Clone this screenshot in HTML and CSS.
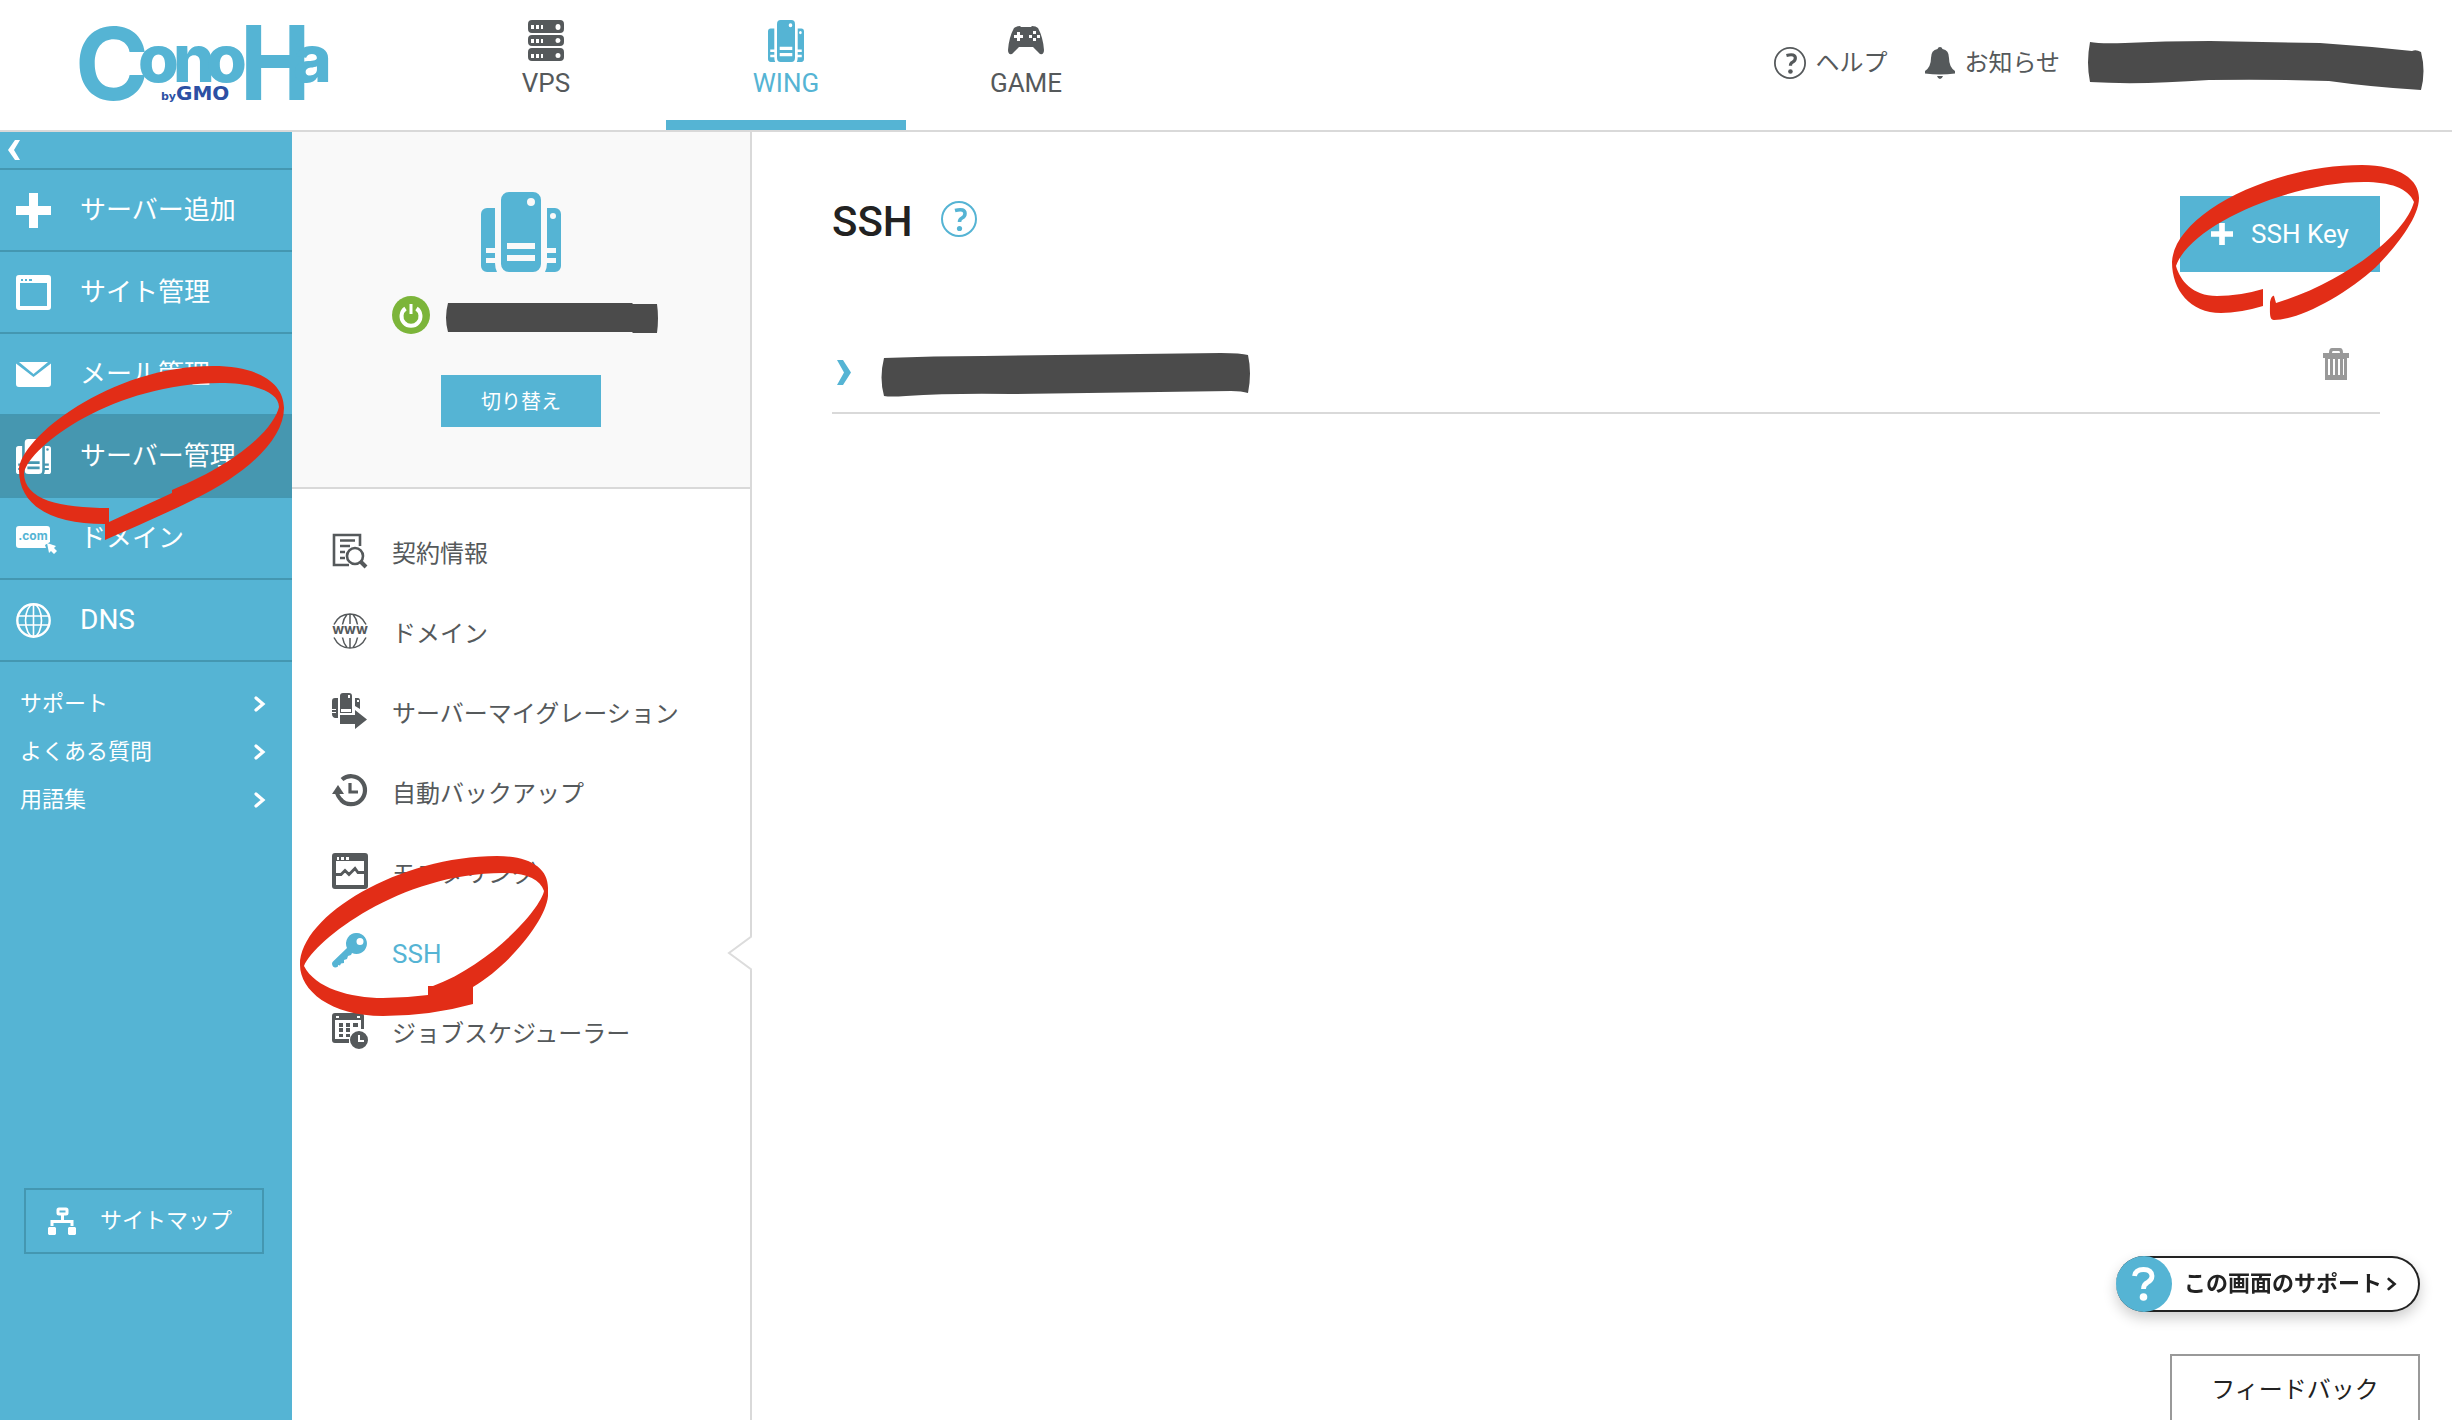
FILE: index.html
```html
<!DOCTYPE html>
<html lang="ja">
<head>
<meta charset="utf-8">
<title>SSH</title>
<link rel="stylesheet" href="styles.css">
</head>
<body>
<svg class="defs" aria-hidden="true">
  <symbol id="wing" viewBox="0 0 80 80">
    <path fill="currentColor" fill-rule="evenodd" d="M28 0h24a8 8 0 0 1 8 8v64a8 8 0 0 1-8 8H28a8 8 0 0 1-8-8V8a8 8 0 0 1 8-8zM26 51v6h28v-6zM26 63v6h28v-6zM50 6a4 4 0 1 0 0 8 4 4 0 0 0 0-8z"/>
    <path fill="currentColor" fill-rule="evenodd" d="M6 16h8v40H5v5h9v5H5v5h9q0 5 2 9H6a6 6 0 0 1-6-6V22a6 6 0 0 1 6-6zM74 16h-8v40h9v5h-9v5h9v5h-9q0 5-2 9h10a6 6 0 0 0 6-6V22a6 6 0 0 0-6-6zM72 21a3 3 0 1 1 0 6 3 3 0 0 1 0-6z"/>
  </symbol>
  <symbol id="chev" viewBox="0 0 12 16"><path d="M2 2l7 6-7 6" fill="none" stroke="currentColor" stroke-width="3.2" stroke-linecap="round"/></symbol>
  <symbol id="help" viewBox="0 0 36 36">
    <circle cx="18" cy="18" r="17" fill="none" stroke="currentColor" stroke-width="2"/>
    <path d="M14 9.500q10-2.500 10 3 0 3-3 4.500-2.500 1.200-2.500 4" fill="none" stroke="currentColor" stroke-width="3.600"/>
    <circle cx="18.500" cy="27.500" r="2.600" fill="currentColor"/>
  </symbol>
  <symbol id="plus" viewBox="0 0 35 35"><path fill="currentColor" d="M13 0h9v13h13v9H22v13h-9V22H0v-9h13z"/></symbol>
</svg>

<header class="header">
  <a class="logo" href="#">
    <svg viewBox="0 0 256 80" width="256" height="80">
      <text class="logo-name"><tspan class="logo-c" x="-5" y="74">C</tspan><tspan class="logo-small" x="58 93 126" y="56">ono</tspan><tspan class="logo-h" x="157" y="74">H</tspan><tspan class="logo-small" x="213" y="56">a</tspan></text>
      <text class="logo-gmo" y="74"><tspan class="logo-by" x="81">by</tspan><tspan x="96">GMO</tspan></text>
    </svg>
  </a>
  <nav class="tabs">
    <a class="tab" href="#">
      <svg viewBox="0 0 36 42" width="36" height="42"><path fill="currentColor" fill-rule="evenodd" d="M4 0h28q4 0 4 4v5q0 4-4 4H4q-4 0-4-4V4q0-4 4-4zm-1 5v4h3V5zm5 0v4h3V5zm5 0v4h2V5zm17-1a2.500 3 0 1 0 0 6 2.500 3 0 0 0 0-6zM4 15h28q4 0 4 4v3q0 4-4 4H4q-4 0-4-4v-3q0-4 4-4zm-1 4v4h3v-4zm5 0v4h3v-4zm5 0v4h2v-4zm17-1a2.500 2.500 0 1 0 0 5 2.500 2.500 0 0 0 0-5zM4 28h28q4 0 4 4v5q0 4-4 4H4q-4 0-4-4v-5q0-4 4-4zm-1 6v4h3v-4zm5 0v4h3v-4zm5 0v4h2v-4zm17-1a2.500 2.500 0 1 0 0 5 2.500 2.500 0 0 0 0-5z"/></svg>
      <span>VPS</span>
    </a>
    <a class="tab tab-on" href="#">
      <svg viewBox="0 0 80 80" width="36" height="42" preserveAspectRatio="none"><use href="#wing"/></svg>
      <span>WING</span>
    </a>
    <a class="tab" href="#">
      <svg viewBox="0 0 36 42" width="36" height="42"><path fill="currentColor" fill-rule="evenodd" d="M6 8q2-2 6-2l1 1h10l1-1q4 0 6 2 5 9 6 22 0 5-4 4l-7-7H11l-7 7q-4 1-4-4Q1 17 6 8zm3 4v3H6v3h3v3h3v-3h3v-3h-3v-3zm16-1v3h3v-3zm0 7v3h3v-3zm-4-3v3h3v-3zm8 0v3h3v-3z"/></svg>
      <span>GAME</span>
    </a>
  </nav>
  <div class="tools">
    <a class="tool" href="#"><svg width="32" height="32"><use href="#help"/></svg>ヘルプ</a>
    <a class="tool" href="#"><svg viewBox="0 0 30 32" width="30" height="32"><path fill="currentColor" d="M15 0q2 0 2.500 2Q24 3 24 11q0 9 6 13v2.500q-15 2-30 0V24q6-4 6-13 0-8 6.500-9Q13 0 15 0zM12 29h6q-1 3-3 3t-3-3z"/></svg>お知らせ</a>
    <svg class="account" viewBox="0 0 336 50" width="336" height="50"><path fill="#4b4b4b" d="M2 1q10 2 35 1Q75 0 122 0l110 2q45 3 92 8 4-2 9 1 5 19 0 38-50-3-92-9-60-2-120-1-70 5-119 2Q-2 22 2 1z"/></svg>
  </div>
</header>

<div class="body">
  <aside class="side">
    <button class="collapse"><svg viewBox="0 0 12 20" width="12" height="20"><path fill="#fff" d="M7 0h5L6 10l6 10H7L0 10z"/></svg></button>
    <nav class="side-nav">
      <a class="side-item" href="#"><svg width="35" height="35"><use href="#plus"/></svg>サーバー追加</a>
      <a class="side-item" href="#"><svg viewBox="0 0 35 35" width="35" height="35"><path fill="#fff" fill-rule="evenodd" d="M3 0h29q3 0 3 3v29q0 3-3 3H3q-3 0-3-3V3q0-3 3-3zm1 8v23h27V8zm1-4v2h2V4zm4 0v2h2V4zm4 0v2h3V4z"/></svg>サイト管理</a>
      <a class="side-item" href="#"><svg viewBox="0 0 35 35" width="35" height="35"><path fill="#fff" d="M3 5h29l-14.500 12zM0 6.500L17.500 20 35 6.500V27q0 3-3 3H3q-3 0-3-3z"/></svg>メール管理</a>
      <div class="side-cell">
        <a class="side-item side-on" href="#"><svg width="35" height="35"><use href="#wing"/></svg>サーバー管理</a>
        <svg class="mark mark-side" viewBox="12 360 280 190" width="280" height="190"><path d="M213 366C260 366 284 384 284 408 284 440 245 475 193 500 165 514 130 529 105 540V524C50 524 19 505 19 470 20 438 110 366 213 366ZM220 383C115 383 30 445 24 473 24 500 60 508 109 508V522L172 493V490C245 460 275 425 279 407 279 392 255 383 220 383Z"/></svg>
      </div>
      <a class="side-item" href="#"><svg class="com" viewBox="0 0 42 35" width="42" height="35"><path fill="#fff" d="M3 5h28q3 0 3 3v13l-5 3 1 3H3q-3 0-3-3V8q0-3 3-3zM31 22l9 3-2 2 3 3-3 3-3-3-2 2z"/><text x="17" y="19" text-anchor="middle" fill="#55b4d4">.com</text></svg>ドメイン</a>
      <a class="side-item" href="#"><svg viewBox="0 0 35 35" width="35" height="35"><g fill="none" stroke="#fff" stroke-width="1.600"><circle cx="17.500" cy="17.500" r="16.200" stroke-width="2.400"/><ellipse cx="17.500" cy="17.500" rx="8" ry="16"/><path d="M17.500 1v33M2 13h31M2 22h31"/></g></svg>DNS</a>
    </nav>
    <nav class="links">
      <a href="#">サポート<svg width="12" height="16"><use href="#chev"/></svg></a>
      <a href="#">よくある質問<svg width="12" height="16"><use href="#chev"/></svg></a>
      <a href="#">用語集<svg width="12" height="16"><use href="#chev"/></svg></a>
    </nav>
    <a class="sitemap" href="#"><svg viewBox="0 0 28 28" width="28" height="28"><g fill="none" stroke="#fff" stroke-width="3"><rect x="10" y="2" width="9" height="5" rx="1"/><path d="M14.500 8v6M4 19v-4.500h20V19"/></g><path fill="#fff" d="M1 20h6l1 1v6l-1 1H1l-1-1v-6zM21 20h6l1 1v6l-1 1h-6l-1-1v-6z"/></svg>サイトマップ</a>
  </aside>

  <section class="panel">
    <div class="server">
      <svg class="server-icon" width="80" height="80"><use href="#wing"/></svg>
      <div class="server-name">
        <svg viewBox="0 0 38 38" width="38" height="38"><circle cx="19" cy="19" r="19" fill="#7cb53a"/><path d="M13.500 12.500a9.500 9.500 0 1 0 11 0" fill="none" stroke="#fff" stroke-width="4"/><path d="M19 8v10" stroke="#fff" stroke-width="3"/></svg>
        <svg class="server-label" viewBox="0 0 212 30" width="212" height="30"><path fill="#4b4b4b" d="M2 0h184l1 1h24q2 14 0 29h-24l-1-1H2q-4-14 0-29z"/></svg>
      </div>
      <button class="btn switch">切り替え</button>
    </div>
    <nav class="menu">
      <a class="menu-item" href="#"><svg viewBox="0 0 36 36" width="36" height="36"><g fill="none" stroke="currentColor" stroke-width="2.600"><path d="M28 13V2H2v30h15M8 7.500h15M8 13h10M8 19h5M8 25h5"/><circle cx="23" cy="23" r="8"/><path d="M29 29l5 5" stroke-width="4"/></g></svg>契約情報</a>
      <a class="menu-item" href="#"><svg class="www" viewBox="0 0 36 36" width="36" height="36"><g fill="none" stroke="currentColor" stroke-width="1.500"><path d="M2 11.500Q7 1 18 1t16 10.500M2 24.500Q7 35 18 35t16-10.500M18 1v10M18 25v10M15 1.500q-3.500 4-4.500 10M21 1.500q3.500 4 4.500 10M10.500 24.500q1 6 4.500 10M25.500 24.500q-1 6-4.500 10"/></g><text x="18" y="21" text-anchor="middle" fill="currentColor">www</text></svg>ドメイン</a>
      <a class="menu-item" href="#"><svg viewBox="0 0 36 36" width="36" height="36"><path fill="currentColor" fill-rule="evenodd" d="M11 0h6q3 0 3 3v17H8V3q0-3 3-3zm5 2v3h2V2zM9 16v3h10v-3zM3 5h3v20H3q-3-1-3-4v-1h4v-1H0v-2h4v-1H0V8q0-3 3-3zM23 5h3q2 0 2 3v8l-5-3zm2 2v2h2V7zM8 22h15v-5l12 9.500L23 36v-5H8z"/></svg>サーバーマイグレーション</a>
      <a class="menu-item" href="#"><svg viewBox="0 0 36 36" width="36" height="36"><path d="M10 6.500A14 14 0 1 1 9 27" fill="none" stroke="currentColor" stroke-width="4.200"/><path d="M6 12l6 9H0z" fill="currentColor"/><path d="M4.500 18q1 6 5.500 9.500" fill="none" stroke="currentColor" stroke-width="4"/><path d="M18 10v9h8" fill="none" stroke="currentColor" stroke-width="3.200"/></svg>自動バックアップ</a>
      <a class="menu-item" href="#"><svg viewBox="0 0 36 36" width="36" height="36"><path fill="currentColor" fill-rule="evenodd" d="M3 0h30q3 0 3 3v30q0 3-3 3H3q-3 0-3-3V3q0-3 3-3zm1 8v24h28V8zm1-4v3h2V4zm4 0v3h3V4zm5 0v3h3V4z"/><path d="M4 21.500h5l4-4 4 4 6-6 3 4h6" fill="none" stroke="currentColor" stroke-width="2.800"/></svg>モニタリング</a>
      <div class="menu-cell">
        <a class="menu-item menu-on" href="#"><svg viewBox="0 0 36 36" width="36" height="36"><path fill="currentColor" fill-rule="evenodd" d="M25 0a10.500 10.500 0 1 1-5 20l-1 2-3 1-1 3-3 1v3l-3 .500-1 2-2-.500v1.500q-3 2-5 0-2-3 0-5L15 15A10.500 10.500 0 0 1 25 0zm3 5a3.500 3.500 0 1 0 0 7 3.500 3.500 0 0 0 0-7z"/></svg>SSH</a>
        <svg class="notch" viewBox="0 0 25 36" width="25" height="36"><path d="M25 1L2 18l23 17" fill="#fff" stroke="#dcdcdc" stroke-width="2"/></svg>
        <svg class="mark mark-menu" viewBox="292 850 264 170" width="264" height="170"><path d="M497 856C530 856 548 868 548 888V896C546 920 510 965 473 987V1004Q430 1016 383 1016C330 1016 300 990 300 965 300 915 400 856 497 856ZM503 873C400 873 315 940 304 966 315 988 350 998 383 998Q405 998 428 995V986H433C490 965 540 910 544 891 540 879 525 873 503 873Z"/></svg>
      </div>
      <a class="menu-item" href="#"><svg viewBox="0 0 36 36" width="36" height="36"><path fill="currentColor" fill-rule="evenodd" d="M3 0h26q3 0 3 3v13h-3V7H3v19h14v4H3q-3 0-3-3V3q0-3 3-3zm1 3v2h3V3zm21 0v2h3V3zM7 10h4v4H7zm7 0h4v4h-4zm7 0h5v4h-5zM7 15h4v4H7zm7 0h4v4h-4zm-7 6h4v3H7zm7 0h4v3h-4zM27 18a9 9 0 1 1 0 18 9 9 0 0 1 0-18zm-1 4v7h6v-2h-4v-5z"/></svg>ジョブスケジューラー</a>
    </nav>
  </section>

  <main class="main">
    <div class="head">
      <h1>SSH</h1>
      <svg class="head-help" width="36" height="36"><use href="#help"/></svg>
      <div class="add-wrap">
        <button class="btn add"><svg width="22" height="22"><use href="#plus"/></svg>SSH Key</button>
        <svg class="mark mark-add" viewBox="2164 160 264 168" width="264" height="168"><path d="M2362 165C2400 165 2419 180 2419 198 2419 225 2376 267 2376 267 2345 295 2300 320 2274 320 2269 320 2270 312 2270 302 2271 297 2273 295 2274 296L2276 303C2345 282 2405 235 2414 202 2408 188 2390 182 2364 182 2290 182 2190 225 2176 266 2180 280 2192 296 2217 296Q2240 296 2263 289V306Q2240 313 2221 313C2190 313 2172 290 2172 262 2174 215 2270 165 2362 165Z"/></svg>
      </div>
    </div>
    <div class="row">
      <button class="expand"><svg viewBox="0 0 14 25" width="14" height="25"><path fill="#55b4d4" d="M0 0h6l8 12.500L6 25H0l7-12.500z"/></svg></button>
      <svg class="key-name" viewBox="0 0 370 44" width="370" height="44"><path fill="#4b4b4b" d="M3 5q50-2 100-2L340 0q20 0 27 2 4 18 0 38-6-2-17-2l-220 3q-60-1-105 2-16 1-22 0-5-18 0-38z"/></svg>
      <button class="trash"><svg viewBox="0 0 28 32" width="28" height="32"><path fill="#999" fill-rule="evenodd" d="M10 0h8q3 0 3 5h6v5h-2v22H3V10H1V5h6q0-5 3-5zm1 3q-1 0-1 2h8q0-2-1-2zM6 11v16h2V11zm5 0v16h2V11zm5 0v16h2V11zm5 0v16h1V11z"/></svg></button>
    </div>
  </main>
</div>

<div class="float">
  <button class="support"><span class="support-icon"><svg viewBox="0 0 24 34" width="24" height="34"><path d="M2.500 9q1-6.500 9-6.500t8.500 6.500q0 4-4.500 6.500-4 2-4 6.500" fill="none" stroke="#fff" stroke-width="4.800"/><circle cx="11.500" cy="30" r="3.800" fill="#fff"/></svg></span>この画面のサポート<svg width="10" height="14"><use href="#chev"/></svg></button>
  <button class="feedback">フィードバック</button>
</div>
</body>
</html>
```

FILE: styles.css
```css
* { box-sizing: border-box; }

body {
  margin: 0;
  min-height: 100vh;
  display: flex;
  flex-direction: column;
  background: #fff;
  color: #55595b;
  font: 24px/36px Roboto, "Noto Sans CJK JP", sans-serif;
}

a { color: inherit; text-decoration: none; }
button { font: inherit; color: inherit; border: 0; padding: 0; background: none; cursor: pointer; }
svg { display: block; flex: none; }
.defs { position: absolute; width: 0; height: 0; }

/* Header */
.header { display: flex; height: 132px; border-bottom: 2px solid #d9d9d9; }
.logo { width: 346px; margin-right: 80px; padding: 26px 0 0 80px; }
.logo svg { overflow: visible; }
.logo-name { font-family: Inter, sans-serif; font-weight: 800; fill: #55b4d4; }
.logo-c { font-size: 100px; font-weight: 700; }
.logo-h { font-family: "Noto Sans CJK JP", sans-serif; font-size: 101px; font-weight: 700; }
.logo-small { font-size: 66px; }
.logo-gmo { font: 700 20px "DejaVu Sans", sans-serif; fill: #2c50a4; }
.logo-by { font-size: 11px; }
.tabs { display: flex; }
.tab {
  display: flex;
  flex-direction: column;
  align-items: center;
  width: 240px;
  padding-top: 20px;
  font-size: 26px;
  line-height: 42px;
  border-bottom: 10px solid transparent;
}
.tab-on { color: #55b4d4; border-color: #55b4d4; }
.tools { display: flex; align-items: center; gap: 38px; height: 126px; margin-left: auto; padding-right: 28px; }
.tool { display: flex; align-items: center; gap: 9px; }
.account { margin: 6px 0 0 -10px; }

/* Columns */
.body { display: flex; flex: 1; }
.btn { background: #55b4d4; color: #fff; }

.side { display: flex; flex-direction: column; width: 292px; background: #55b4d4; color: #fff; padding-bottom: 166px; }
.collapse { display: flex; align-items: center; height: 38px; padding-left: 8px; border-bottom: 2px solid #4497b1; }
.side-item {
  display: flex;
  align-items: center;
  gap: 29px;
  height: 82px;
  padding-left: 16px;
  font-size: 26px;
  border-bottom: 2px solid #4497b1;
}
.side-item:last-child { font-size: 28px; }
.side-cell { position: relative; }
.side-on { background: #4697b0; }
.com { margin-right: -7px; }
.com text { font: 700 12px Inter, sans-serif; }
.links { padding: 18px 26px 0 20px; font-size: 22px; }
.links a { display: flex; align-items: center; justify-content: space-between; height: 48px; }
.sitemap {
  display: flex;
  align-items: center;
  gap: 24px;
  height: 66px;
  margin: auto 28px 0 24px;
  padding-left: 22px;
  border: 2px solid #4497b1;
  font-size: 22px;
}

.panel { width: 460px; border-right: 2px solid #d9d9d9; }
.server {
  display: flex;
  flex-direction: column;
  align-items: center;
  height: 357px;
  padding-top: 60px;
  background: #f9f9f9;
  border-bottom: 2px solid #d9d9d9;
}
.server-icon { color: #55b4d4; }
.server-name { display: flex; align-items: center; gap: 16px; margin: 24px 0 41px 8px; }
.server-label { margin-top: 6px; }
.switch { width: 160px; height: 52px; padding-top: 2px; font-size: 20px; }
.menu { padding-top: 24px; }
.menu-item { display: flex; align-items: center; gap: 24px; height: 80px; padding: 2px 0 0 40px; }
.menu-item svg { margin-bottom: 6px; }
.www text { font: 700 14px Inter, sans-serif; }
.menu-cell { position: relative; }
.menu-on { color: #55b4d4; font-size: 26px; }
.notch { position: absolute; right: -2px; top: 22px; }

/* Main */
.main { flex: 1; padding: 64px 72px 0 80px; }
.head { display: flex; height: 120px; }
h1 { margin: 0; color: #222; font-size: 42px; line-height: 52px; font-weight: 500; }
.head-help { margin: 5px 0 0 28px; color: #55b4d4; }
.add-wrap { position: relative; height: 76px; margin-left: auto; }
.add { display: flex; align-items: center; justify-content: center; gap: 18px; width: 200px; height: 76px; font-size: 26px; }
.row { display: flex; align-items: center; height: 98px; padding: 0 30px 0 5px; border-bottom: 2px solid #d9d9d9; }
.key-name { margin: 22px 0 0 30px; }
.expand { padding-top: 16px; }
.trash { margin-left: auto; }

/* Hand-drawn highlights */
.mark { position: absolute; fill: #e22d17; fill-rule: evenodd; pointer-events: none; }
.mark-side { left: 12px; top: -56px; z-index: 2; }
.mark-menu { left: 0; top: -63px; z-index: 2; }
.mark-add { left: -16px; top: -36px; }

/* Floating controls */
.float { position: fixed; right: 32px; bottom: 0; display: flex; flex-direction: column; align-items: flex-end; gap: 42px; color: #222; }
.support {
  display: flex;
  align-items: center;
  gap: 5px;
  height: 56px;
  padding-right: 21px;
  background: #fff;
  border: 2px solid #222;
  border-left: 0;
  border-radius: 28px;
  box-shadow: 0 6px 14px rgba(0, 0, 0, .2);
  font-size: 22px;
  font-weight: 700;
}
.support-icon { display: flex; align-items: center; justify-content: center; width: 56px; height: 56px; margin-right: 7px; border-radius: 50%; background: #55b4d4; }
.feedback { width: 250px; height: 66px; padding-top: 3px; background: #fff; border: 2px solid #999; border-bottom: 0; }
```
